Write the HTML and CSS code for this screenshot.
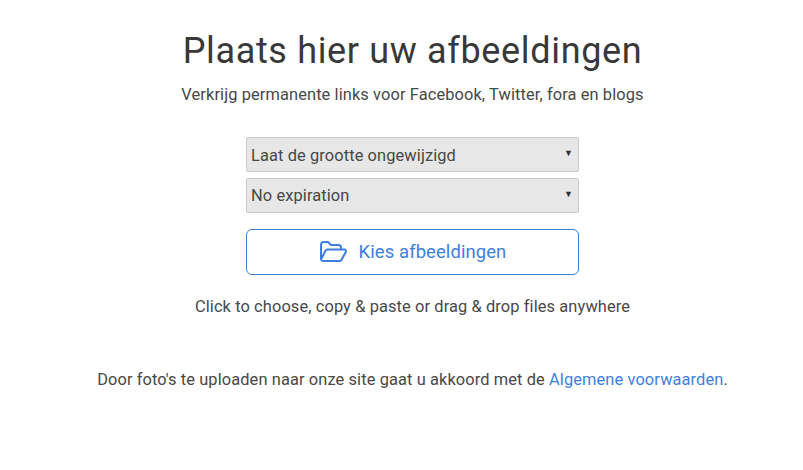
FILE: index.html
```html
<!DOCTYPE html>
<html lang="nl">
<head>
  <meta charset="UTF-8">
  <meta name="viewport" content="width=device-width, initial-scale=1.0">
  <title>Plaats hier uw afbeeldingen</title>
  <link rel="stylesheet" href="styles.css">
</head>
<body>
  <div class="container">
    <h1>Plaats hier uw afbeeldingen</h1>
    <p class="subtitle">Verkrijg permanente links voor Facebook, Twitter, fora en blogs</p>
    <form class="upload-form">
      <div class="select-box">
        <span>Laat de grootte ongewijzigd</span>
        <span class="arrow">&#9660;</span>
      </div>
      <div class="select-box">
        <span>No expiration</span>
        <span class="arrow">&#9660;</span>
      </div>
      <button type="button" class="button">
        <svg class="folder-icon" width="28" height="21" viewBox="0 0 28 21" fill="none" stroke="currentColor" stroke-width="2" stroke-linejoin="round" stroke-linecap="round">
          <path d="M2 18V3.5A2.5 2.5 0 0 1 4.5 1H9l3 3h7.5A2.5 2.5 0 0 1 22 6.500V8"/>
          <path d="M2 18.500c0.300 0.800 1 1.500 2 1.500h16.500c0.800 0 1.500-0.400 1.900-1.100L26.800 11c0.500-1-0.200-2.500-1.500-2.500H8.500c-0.900 0-1.600 0.500-2 1.200z"/>
        </svg>
        <span>Kies afbeeldingen</span>
      </button>
    </form>
    <p class="hint">Click to choose, copy &amp; paste or drag &amp; drop files anywhere</p>
    <p class="terms">Door foto's te uploaden naar onze site gaat u akkoord met de <a href="#">Algemene voorwaarden</a>.</p>
  </div>
</body>
</html>
```

FILE: styles.css
```css
* {
  margin: 0;
  padding: 0;
  box-sizing: border-box;
  font-family: Roboto, sans-serif;
}

body {
  background-color: white;
  color: #484848;
  letter-spacing: 0.11px;
}

.container {
  padding: 28px 0 0 22px;
  text-align: center;
}

h1 {
  font-size: 36px;
  font-weight: 400;
  line-height: 46px;
  letter-spacing: 0.66px;
  color: #383838;
}

.subtitle {
  margin-top: 10px;
  font-size: 16.4px;
  line-height: 22px;
}

.upload-form {
  width: 333px;
  margin: 31px auto 0;
}

.select-box {
  display: flex;
  justify-content: space-between;
  align-items: center;
  height: 35px;
  margin-bottom: 6px;
  padding: 1px 5px 0 4px;
  font-size: 16.4px;
  text-align: left;
  background-color: #e7e7e7;
  border: 1px solid #ccc;
  border-radius: 2px;
}

.select-box + .select-box {
  padding-top: 0;
}

.arrow {
  font-size: 9px;
  color: #333;
  margin-top: -4px;
}

.button {
  display: flex;
  justify-content: center;
  align-items: center;
  gap: 12px;
  width: 100%;
  height: 46px;
  margin-top: 16px;
  padding-bottom: 2px;
  font-size: 18.4px;
  letter-spacing: 0.12px;
  color: #3d7fe0;
  background-color: white;
  border: 1px solid #3d7fd0;
  border-radius: 6px;
}

.hint {
  margin-top: 21px;
  font-size: 16.4px;
  line-height: 22px;
}

.terms {
  margin-top: 51px;
  font-size: 16.4px;
  line-height: 22px;
}

.terms a {
  color: #3d7fe0;
  text-decoration: none;
}
```
